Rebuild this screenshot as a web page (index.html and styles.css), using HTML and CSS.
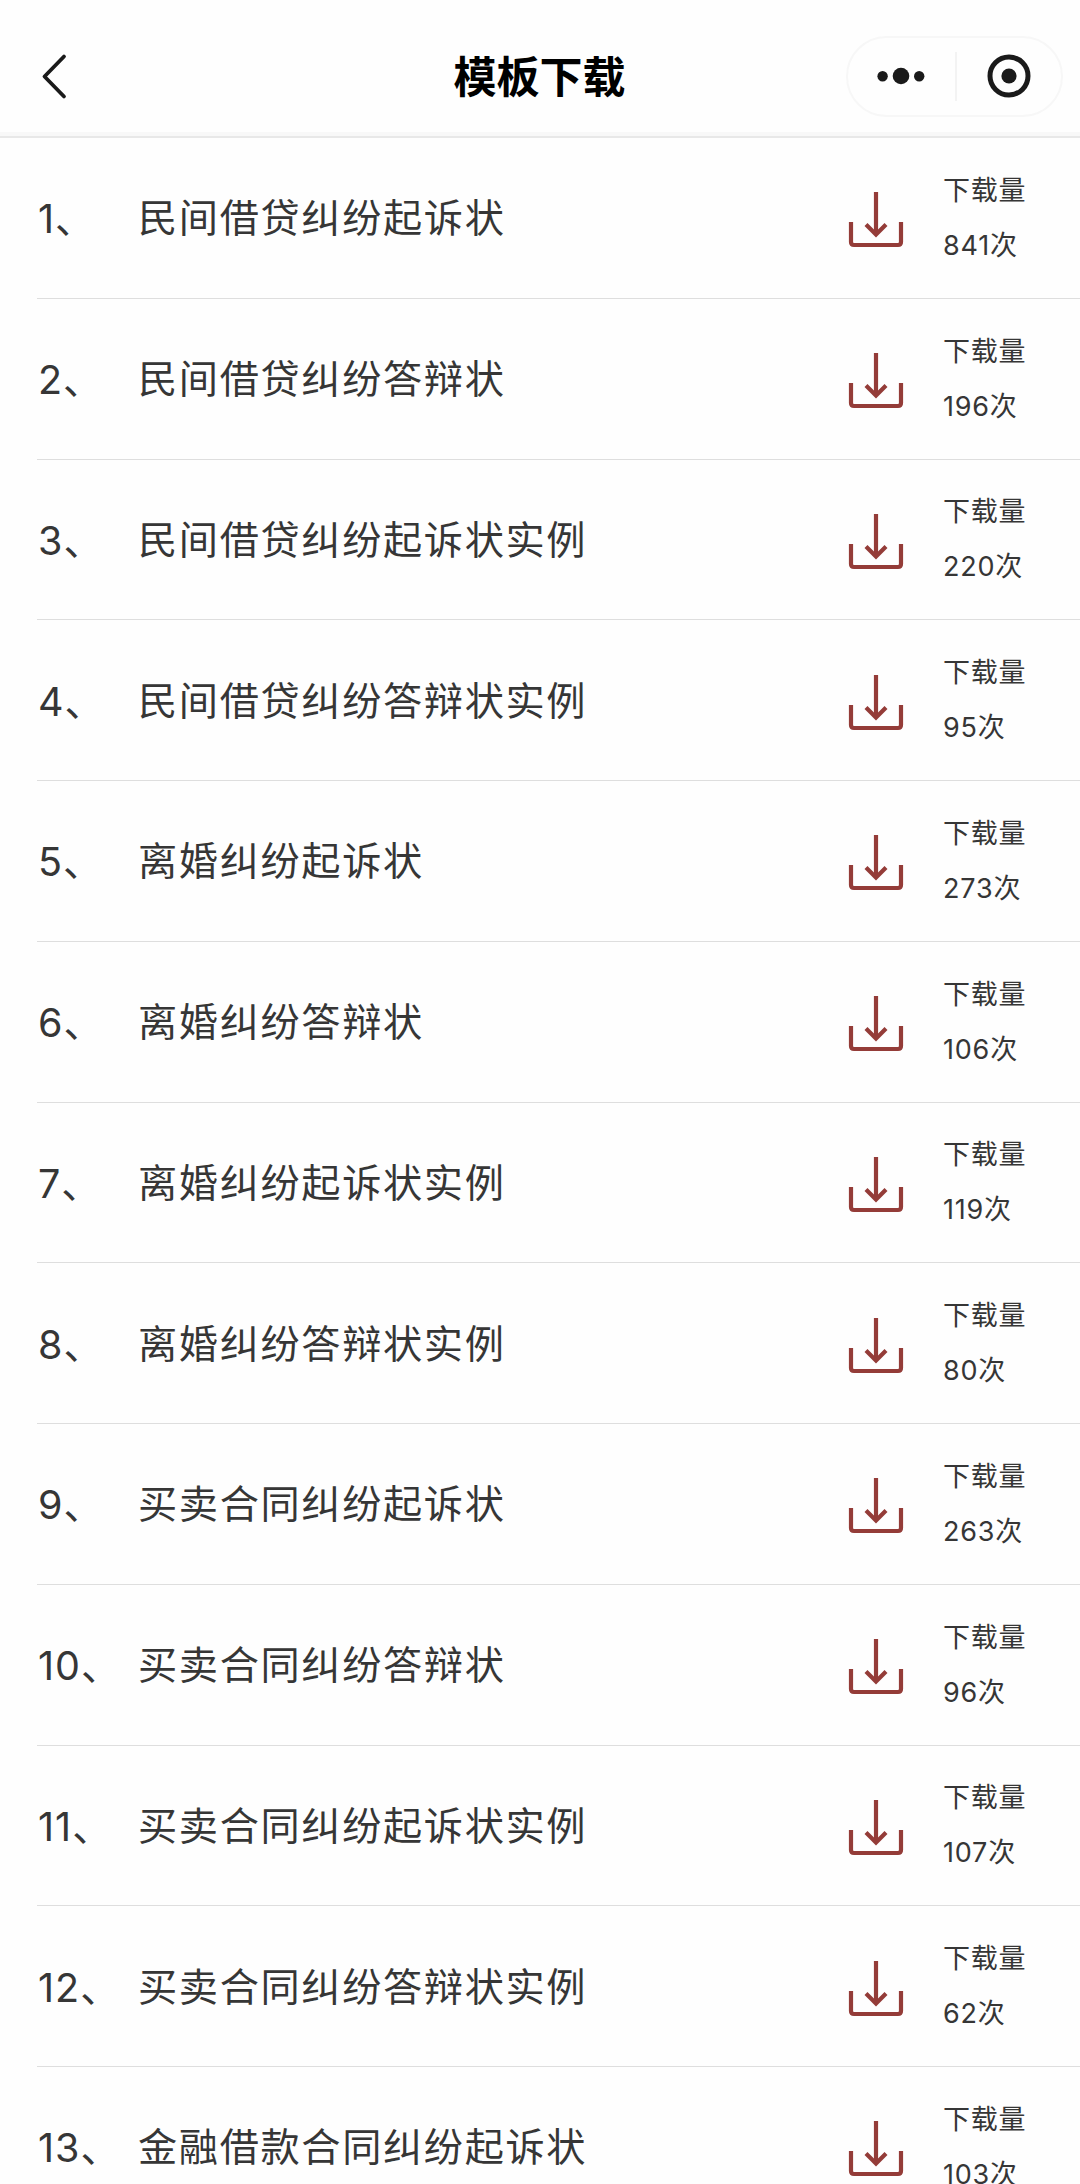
FILE: index.html
```html
<!DOCTYPE html>
<html lang="zh-CN">

<head>
    <meta charset="UTF-8">
    <meta name="viewport" content="width=device-width, initial-scale=1.0">
    <title>模板下载</title>
    <link rel="stylesheet" href="styles.css">
</head>

<body>
    <header class="navbar">
        <svg class="back" viewBox="0 0 30 50"><path d="M24 5.5 L4.5 25.5 L24 45.5"/></svg>
        <h1>模板下载</h1>
        <div class="capsule">
            <svg class="dots" viewBox="0 0 50 20">
                <circle cx="6.6" cy="10.3" r="5.2"/>
                <circle cx="25" cy="10" r="8.3"/>
                <circle cx="43.2" cy="10.3" r="5.2"/>
            </svg>
            <span class="line"></span>
            <svg class="close" viewBox="0 0 46 46">
                <circle class="ring" cx="23" cy="23" r="19"/>
                <circle cx="23" cy="23" r="7.6"/>
            </svg>
        </div>
    </header>

    <ul class="list" id="list"></ul>

    <script>
        const templates = [
            ['民间借贷纠纷起诉状', 841],
            ['民间借贷纠纷答辩状', 196],
            ['民间借贷纠纷起诉状实例', 220],
            ['民间借贷纠纷答辩状实例', 95],
            ['离婚纠纷起诉状', 273],
            ['离婚纠纷答辩状', 106],
            ['离婚纠纷起诉状实例', 119],
            ['离婚纠纷答辩状实例', 80],
            ['买卖合同纠纷起诉状', 263],
            ['买卖合同纠纷答辩状', 96],
            ['买卖合同纠纷起诉状实例', 107],
            ['买卖合同纠纷答辩状实例', 62],
            ['金融借款合同纠纷起诉状', 103]
        ];

        document.getElementById('list').innerHTML = templates.map(([name, count], i) => `
            <li class="item">
                <span class="num">${i + 1}、</span>
                <span class="name">${name}</span>
                <svg class="download" viewBox="0 0 56 58">
                    <path d="M28 1 V43"/>
                    <path d="M18 33.5 L28 43.5 L38 33.5"/>
                    <path d="M3 31 V51 Q3 54 6 54 H50 Q53 54 53 51 V31"/>
                </svg>
                <div class="count">
                    <p>下载量</p>
                    <p>${count}次</p>
                </div>
            </li>`).join('');
    </script>
</body>

</html>
```
FILE: styles.css
```css
* {
    margin: 0;
    padding: 0;
    box-sizing: border-box;
}

body {
    height: 100vh;
    overflow: hidden;
    background: #fefefe;
    color: #363636;
    font-family: 'Inter', 'Noto Sans CJK SC', sans-serif;
}

/* top bar */
.navbar {
    height: 138px;
    padding: 16px 17px 0 40px;
    display: grid;
    grid-template-columns: 1fr auto 1fr;
    align-items: center;
    border-bottom: 2px solid #e8e8e8;
    box-shadow: inset 0 -4px 0 #f8f8f8;
}

.navbar h1 {
    font-size: 43px;
    line-height: 60px;
    padding-top: 2px;
    font-weight: 700;
    color: #000;
    transform: translateX(-12px);
}

.back {
    width: 30px;
    height: 50px;
    fill: none;
    stroke: #1a1a1a;
    stroke-width: 3.8;
    stroke-linecap: round;
    stroke-linejoin: round;
}

.capsule {
    justify-self: end;
    width: 217px;
    height: 81px;
    padding: 0 29px 0 28px;
    display: flex;
    align-items: center;
    justify-content: space-between;
    border: 2px solid #f7f7f7;
    border-radius: 41px;
    fill: #1a1a1a;
}

.dots {
    width: 50px;
    height: 20px;
}

.line {
    width: 2px;
    height: 49px;
    background: #f3f3f3;
}

.close {
    width: 46px;
    height: 46px;
}

.ring {
    fill: none;
    stroke: #1a1a1a;
    stroke-width: 5;
}

/* template list */
.list {
    list-style: none;
    padding-left: 37px;
}

.item {
    height: 160.75px;
    display: flex;
    align-items: center;
    border-bottom: 1px solid #dedede;
}

.num {
    width: 101px;
    padding: 0 0 4px 1px;
    font-size: 39.5px;
    letter-spacing: 1px;
    white-space: nowrap;
}

.name {
    flex: 1;
    padding-bottom: 5px;
    font-size: 39.2px;
    letter-spacing: 1.65px;
}

.download {
    width: 56px;
    height: 58px;
    margin: 5px 39px 0 0;
    fill: none;
    stroke: #943c38;
    stroke-width: 4.2;
}

.count {
    width: 137px;
    font-size: 27px;
    line-height: 55px;
    letter-spacing: 0.8px;
}
```
